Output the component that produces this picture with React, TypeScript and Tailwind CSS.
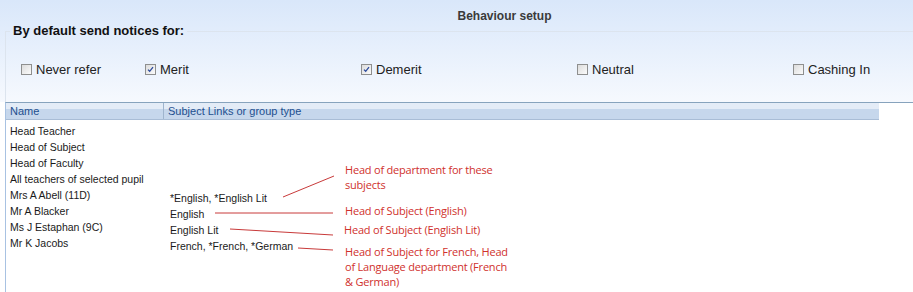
import React from 'react';

type Option = { label: string; checked: boolean; width: string };

const options: Option[] = [
  { label: 'Never refer', checked: false, width: 'w-[124px]' },
  { label: 'Merit', checked: true, width: 'w-[216px]' },
  { label: 'Demerit', checked: true, width: 'w-[216px]' },
  { label: 'Neutral', checked: false, width: 'w-[216px]' },
  { label: 'Cashing In', checked: false, width: 'w-[100px]' },
];

const rows: { name: string; links: string }[] = [
  { name: 'Head Teacher', links: '' },
  { name: 'Head of Subject', links: '' },
  { name: 'Head of Faculty', links: '' },
  { name: 'All teachers of selected pupil', links: '' },
  { name: 'Mrs A Abell (11D)', links: '*English, *English Lit' },
  { name: 'Mr A Blacker', links: 'English' },
  { name: 'Ms J Estaphan (9C)', links: 'English Lit' },
  { name: 'Mr K Jacobs', links: 'French, *French, *German' },
];

const CheckBox: React.FC<{ checked: boolean }> = ({ checked }) => (
  <span className="relative flex h-[11px] w-[11px] items-center justify-center border border-[#8e8f8f] bg-gradient-to-br from-[#dcdcdc] to-[#fbfbfb]">
    {checked && (
      <svg width="9" height="9" viewBox="0 0 9 9" className="absolute">
        <path d="M2 4.6 L3.7 6.3 L7 2.2" fill="none" stroke="#2b4a9c" strokeWidth="1.3" />
      </svg>
    )}
  </span>
);

const App: React.FC = () => {
  return (
    <div className="relative h-[292px] w-[913px] overflow-hidden bg-white font-['Liberation_Sans',Arial,sans-serif]">
      <div className="bg-gradient-to-b from-[#d9e7fa] to-[#f6f9fe]">
        {/* Title */}
        <div className="h-[24px] pl-[96px] pt-[9px] text-center text-[12px] font-bold leading-[14px] text-[#3a3a3a]">
          Behaviour setup
        </div>

        {/* Group box */}
        <fieldset className="ml-[5px] h-[78px] border-l border-t border-[#dce4ee] pl-[15px]">
          <legend className="-ml-[11px] px-[3px] text-[13px] font-bold leading-[14px] text-[#111]">
            By default send notices for:
          </legend>
          <div className="flex pt-[24px]">
            {options.map((o) => (
              <label key={o.label} className={`flex items-center gap-[4px] ${o.width}`}>
                <CheckBox checked={o.checked} />
                <span className="text-[13px] leading-[15px] text-[#222]">{o.label}</span>
              </label>
            ))}
          </div>
        </fieldset>
      </div>

      {/* Grid */}
      <div className="ml-[5px] h-[190px] border-l border-t border-l-[#a8c2e2] border-t-[#87a3bd] bg-white">
        <div className="flex h-[17px] w-[873px] border-b border-[#a9bdd6] bg-gradient-to-b from-[#e4ecf7] from-40% to-[#c6d7ec] to-40% text-[11px] leading-[16px] text-[#1e4f8f]">
          <div className="w-[158px] border-r border-[#9fb4cd] pl-[4px]">Name</div>
          <div className="pl-[4px]">Subject Links or group type</div>
        </div>
        <div className="pt-[3px] text-[10.5px] text-[#1a1a1a]">
          {rows.map((r) => (
            <div key={r.name} className="flex h-[16px] leading-[16px]">
              <div className="w-[160px] pl-[4px]">{r.name}</div>
              <div className="pl-[4px] pt-[3px]">{r.links}</div>
            </div>
          ))}
        </div>
      </div>

      {/* Annotations overlay */}
      <svg className="pointer-events-none absolute left-0 top-0" width="913" height="292">
        <g stroke="#c83a3a" strokeWidth="1" fill="none">
          <line x1="283" y1="197" x2="334" y2="176" />
          <line x1="215" y1="213" x2="333" y2="213" />
          <line x1="230" y1="229" x2="333" y2="235" />
          <line x1="298" y1="248" x2="333" y2="250" />
        </g>
      </svg>
      <div className="absolute left-[345px] top-[162px] font-['Open_Sans',sans-serif] text-[11px] leading-[15px] tracking-[-0.2px] text-[#d0312d]">
        Head of department for these
        <br />
        subjects
      </div>
      <div className="absolute left-[345px] top-[203px] font-['Open_Sans',sans-serif] text-[11px] leading-[15px] tracking-[-0.2px] text-[#d0312d]">
        Head of Subject (English)
      </div>
      <div className="absolute left-[344px] top-[222px] font-['Open_Sans',sans-serif] text-[11px] leading-[15px] tracking-[-0.2px] text-[#d0312d]">
        Head of Subject (English Lit)
      </div>
      <div className="absolute left-[345px] top-[244px] font-['Open_Sans',sans-serif] text-[11px] leading-[15px] tracking-[-0.2px] text-[#d0312d]">
        Head of Subject for French, Head
        <br />
        of Language department (French
        <br />
        &amp; German)
      </div>
    </div>
  );
};

export default App;
